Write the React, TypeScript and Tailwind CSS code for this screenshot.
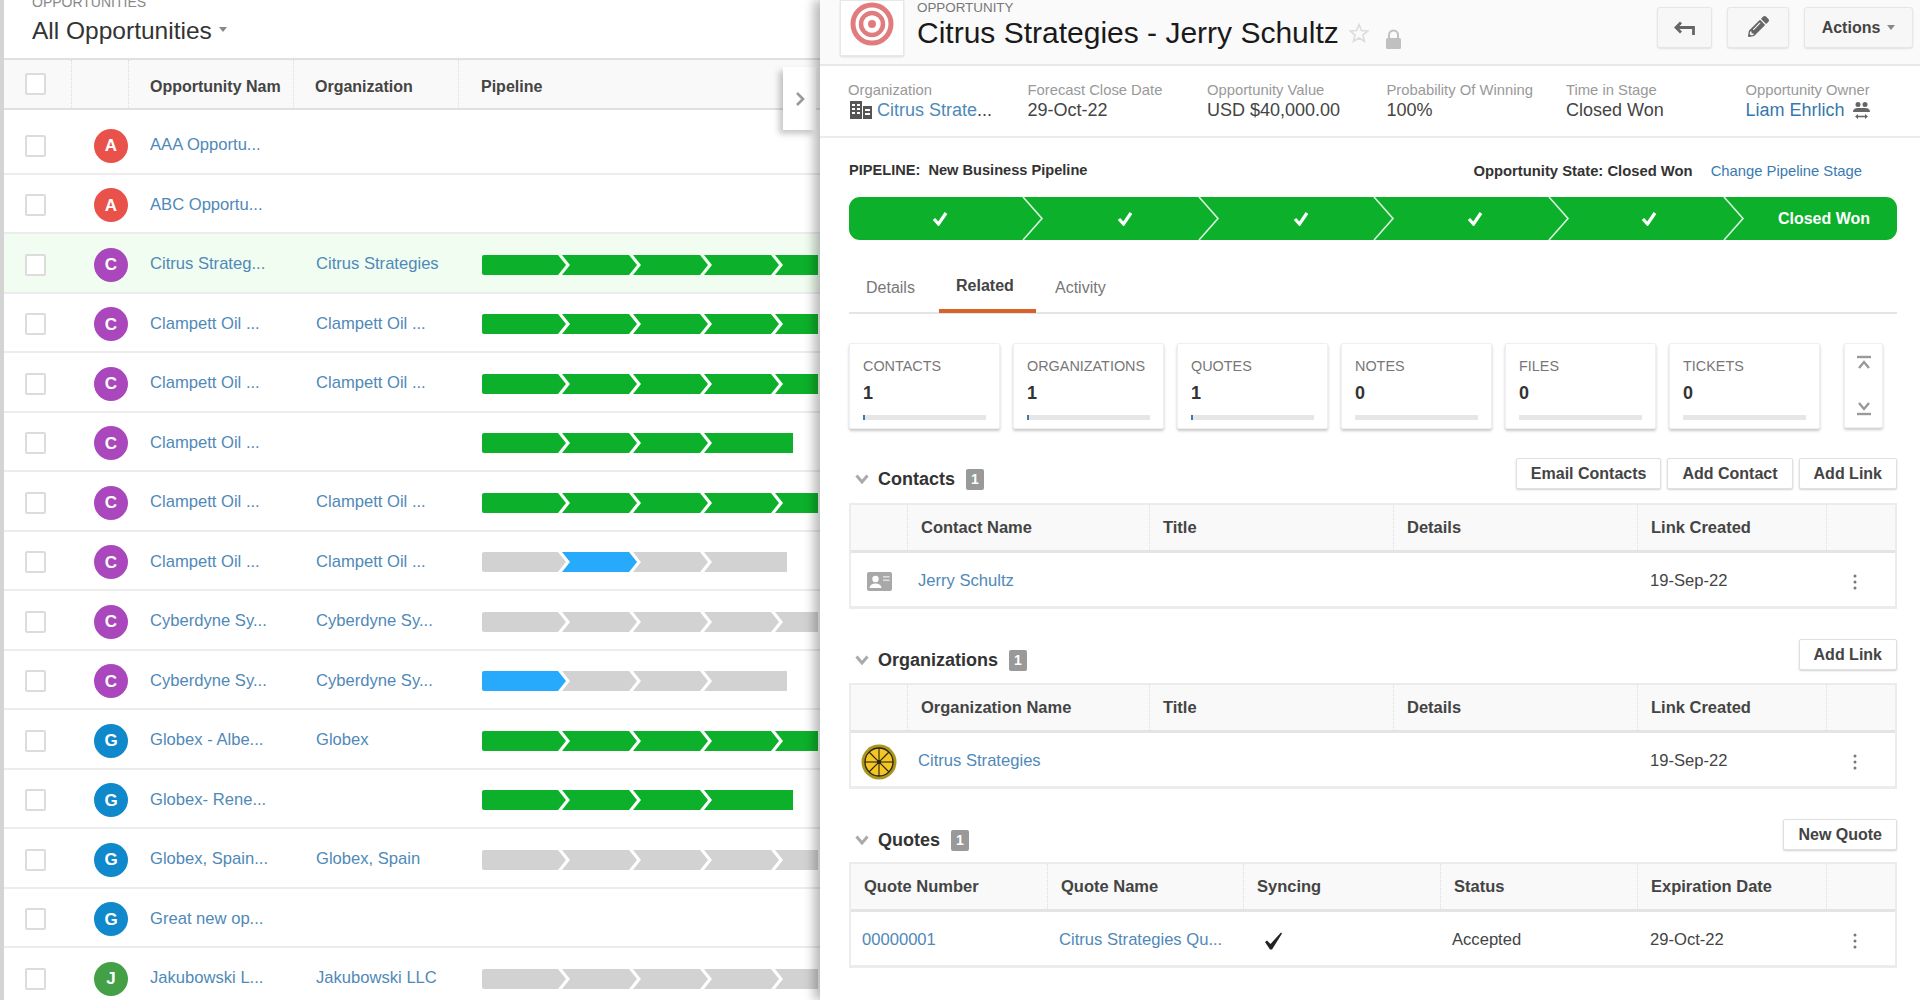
import React from "react";
import { FaPencilAlt } from "react-icons/fa";

const GREEN = "#0db02b";
const GRAY = "#d2d2d2";
const BLUE = "#27aafc";

type Row = { l: string; color: string; name: string; org?: string; stages?: string[]; end?: number; hl?: boolean };

const g5 = [GREEN, GREEN, GREEN, GREEN, GREEN];
const g4 = [GREEN, GREEN, GREEN, GREEN];
const n5 = [GRAY, GRAY, GRAY, GRAY, GRAY];

const rows: Row[] = [
  { l: "A", color: "#e8524a", name: "AAA Opportu..." },
  { l: "A", color: "#e8524a", name: "ABC Opportu..." },
  { l: "C", color: "#ab47bc", name: "Citrus Strateg...", org: "Citrus Strategies", stages: g5, hl: true },
  { l: "C", color: "#ab47bc", name: "Clampett Oil ...", org: "Clampett Oil ...", stages: g5 },
  { l: "C", color: "#ab47bc", name: "Clampett Oil ...", org: "Clampett Oil ...", stages: g5 },
  { l: "C", color: "#ab47bc", name: "Clampett Oil ...", stages: g4, end: 311 },
  { l: "C", color: "#ab47bc", name: "Clampett Oil ...", org: "Clampett Oil ...", stages: g5 },
  { l: "C", color: "#ab47bc", name: "Clampett Oil ...", org: "Clampett Oil ...", stages: [GRAY, BLUE, GRAY, GRAY], end: 305 },
  { l: "C", color: "#ab47bc", name: "Cyberdyne Sy...", org: "Cyberdyne Sy...", stages: n5 },
  { l: "C", color: "#ab47bc", name: "Cyberdyne Sy...", org: "Cyberdyne Sy...", stages: [BLUE, GRAY, GRAY, GRAY], end: 305 },
  { l: "G", color: "#0f88cc", name: "Globex - Albe...", org: "Globex", stages: g5 },
  { l: "G", color: "#0f88cc", name: "Globex- Rene...", stages: g4, end: 311 },
  { l: "G", color: "#0f88cc", name: "Globex, Spain...", org: "Globex, Spain", stages: n5 },
  { l: "G", color: "#0f88cc", name: "Great new op..." },
  { l: "J", color: "#43a047", name: "Jakubowski L...", org: "Jakubowski LLC", stages: n5 },
];

function Stages({ stages, end }: { stages: string[]; end?: number }) {
  return (
    <svg width="336" height="20" className="block">
      {stages.map((c, i) => {
        const last = i === stages.length - 1 && end !== undefined;
        if (i === 0) return <path key={i} d="M2 0 L76 0 L84 10 L76 20 L2 20 Q0 20 0 18 L0 2 Q0 0 2 0 Z" fill={c} />;
        const s = 80 + 71 * (i - 1);
        const pts = last
          ? `${s},0 ${end},0 ${end},20 ${s},20 ${s + 8},10`
          : `${s},0 ${s + 67},0 ${s + 75},10 ${s + 67},20 ${s},20 ${s + 8},10`;
        return <polygon key={i} points={pts} fill={c} />;
      })}
    </svg>
  );
}

function Check() {
  return <div className="w-[21px] h-[22px] border-2 border-[#dcdcdc] rounded-[2px] bg-white" />;
}

function LeftPanel() {
  return (
    <div className="relative w-[820px] h-[1000px] flex-none bg-white border-l-4 border-[#d4d4d4] overflow-hidden">
      <div className="h-[58px] pl-[28px] flex flex-col">
        <div className="mt-[-5px] text-[14px] leading-[14px] text-[#888]">OPPORTUNITIES</div>
        <div className="mt-[6.5px] flex items-center gap-[7px] text-[24.5px] leading-[30px] text-[#333]">
          All Opportunities
          <svg width="8" height="5" className="mt-[-2px]"><polygon points="0,0 8,0 4,5" fill="#888" /></svg>
        </div>
      </div>
      <div className="h-[52px] grid grid-cols-[68px_57px_165px_165px_1fr] bg-[#f9f9f9] border-t-2 border-b-2 border-[#e0e0e0] text-[16px] font-bold text-[#444]">
        <div className="pl-[21px] flex items-center border-r border-dotted border-[#ddd]"><Check /></div>
        <div className="border-r border-dotted border-[#ddd]" />
        <div className="pl-[21px] pt-[5px] flex items-center border-r border-dotted border-[#ddd]">
          <div className="w-[131px] overflow-hidden whitespace-nowrap">Opportunity Name</div>
        </div>
        <div className="pl-[21px] pt-[5px] flex items-center border-r border-dotted border-[#ddd]">Organization</div>
        <div className="pl-[22px] pt-[5px] flex items-center">Pipeline</div>
      </div>
      <div className="pt-[5px]">
        {rows.map((r, i) => (
          <div
            key={i}
            className={`h-[59.5px] pt-[4px] grid grid-cols-[68px_57px_165px_165px_1fr] items-center border-b-2 border-[#ececec] text-[16.6px] text-[#4f89b8] whitespace-nowrap ${r.hl ? "bg-[#f1fdf0]" : "bg-white"}`}
          >
            <div className="pl-[21px]"><Check /></div>
            <div className="pl-[22px]">
              <div className="w-[34px] h-[34px] rounded-full flex items-center justify-center text-white font-bold text-[17px]" style={{ backgroundColor: r.color }}>{r.l}</div>
            </div>
            <div className="pl-[21px]">{r.name}</div>
            <div className="pl-[22px]">{r.org}</div>
            <div className="pl-[23px] overflow-hidden">{r.stages && <Stages stages={r.stages} end={r.end} />}</div>
          </div>
        ))}
      </div>
      <div className="absolute left-[779px] top-[67px] w-[33px] h-[63px] bg-white shadow-[-4px_4px_6px_rgba(0,0,0,0.22)] flex items-center justify-center">
        <svg width="10" height="14" viewBox="0 0 10 14" fill="none" stroke="#999" strokeWidth="2.6"><path d="M2 1 L8 7 L2 13" /></svg>
      </div>
    </div>
  );
}

const btn = "h-[31px] px-[14px] flex items-center bg-white border border-[#e0e0e0] rounded-[2px] shadow-[0_1px_2px_rgba(0,0,0,0.18)] text-[16px] font-bold text-[#444] whitespace-nowrap";

function SectionHead({ title, mt, children }: { title: string; mt: string; children: React.ReactNode }) {
  return (
    <div className={`flex justify-between items-start ${mt}`}>
      <div className="mt-[10px] flex items-center text-[18px] leading-[22px] font-bold text-[#333]">
        <svg width="14" height="10" viewBox="0 0 14 10" fill="none" stroke="#aaa" strokeWidth="3" className="ml-[6px] mr-[9px]"><path d="M1.5 1.5 L7 8 L12.5 1.5" /></svg>
        {title}
        <span className="ml-[11px] w-[18px] h-[21px] rounded-[2px] bg-[#999] text-white text-[14px] flex items-center justify-center">1</span>
      </div>
      <div className="flex gap-[6px]">{children}</div>
    </div>
  );
}

function Dots() {
  return (
    <svg width="4" height="16" viewBox="0 0 4 16" fill="#777" className="ml-[26px]">
      <circle cx="2" cy="2" r="1.5" /><circle cx="2" cy="8" r="1.5" /><circle cx="2" cy="14" r="1.5" />
    </svg>
  );
}

const th = "flex items-center pl-[13px] border-r border-dotted border-[#ddd]";
const tableBox = "border-2 border-[#ececec] border-b-[3px]";
const headRow = "h-[48px] grid bg-[#f9f9f9] border-b-[3px] border-[#e4e4e4] text-[16.5px] font-bold text-[#444] whitespace-nowrap";
const bodyRow = "h-[53px] pt-[4px] grid items-center text-[16.6px] text-[#444] whitespace-nowrap";
const lnk = "text-[#4f89b8]";

function LinkTable({ name, icon, label, mt }: { name: string; icon: React.ReactNode; label: string; mt: string }) {
  const cols = "grid-cols-[57px_242px_244px_244px_189px_1fr]";
  return (
    <div className={`${tableBox} ${mt}`}>
      <div className={`${headRow} ${cols}`}>
        <div className={th} />
        <div className={th}>{name}</div>
        <div className={th}>Title</div>
        <div className={th}>Details</div>
        <div className={th}>Link Created</div>
        <div />
      </div>
      <div className={`${bodyRow} ${cols}`}>
        <div className="flex justify-center">{icon}</div>
        <div className={`pl-[10px] ${lnk}`}>{label}</div>
        <div />
        <div />
        <div className="pl-[12px]">19-Sep-22</div>
        <Dots />
      </div>
    </div>
  );
}

function QuoteTable() {
  const cols = "grid-cols-[197px_196px_197px_197px_189px_1fr]";
  return (
    <div className={`${tableBox} mt-[11px]`}>
      <div className={`${headRow} ${cols}`}>
        <div className={th}>Quote Number</div>
        <div className={th}>Quote Name</div>
        <div className={th}>Syncing</div>
        <div className={th}>Status</div>
        <div className={th}>Expiration Date</div>
        <div />
      </div>
      <div className={`${bodyRow} ${cols}`}>
        <div className={`pl-[11px] ${lnk}`}>00000001</div>
        <div className={`pl-[11px] ${lnk}`}>Citrus Strategies Qu...</div>
        <div className="pl-[20px]">
          <svg width="20" height="18" viewBox="0 0 20 18" fill="#222"><path d="M1 10 L3 8.5 L6.5 12 L17 0.5 L18 1.5 L8 17.5 L6 17.5 Z" /></svg>
        </div>
        <div className="pl-[11px]">Accepted</div>
        <div className="pl-[12px]">29-Oct-22</div>
        <Dots />
      </div>
    </div>
  );
}

function ContactIcon() {
  return (
    <svg width="25" height="19" viewBox="0 0 25 19" className="ml-[-1px]">
      <rect width="25" height="19" rx="2" fill="#a8a8a8" />
      <circle cx="8.5" cy="7" r="3.2" fill="#fff" />
      <path d="M2.5 16 Q3 11.5 8.5 11.5 Q14 11.5 14.5 16 Z" fill="#fff" />
      <rect x="16" y="4" width="6.5" height="1.6" fill="#ddd" />
      <rect x="16" y="7.5" width="6.5" height="1.6" fill="#ddd" />
    </svg>
  );
}

function CitrusIcon() {
  return (
    <svg width="36" height="36" viewBox="0 0 36 36" className="ml-[-1px]">
      <circle cx="18" cy="18" r="17.5" fill="#a8951f" />
      <circle cx="18" cy="18" r="14" fill="#f3c525" />
      <g stroke="#2a2410" strokeWidth="1.1">
        <line x1="18" y1="4" x2="18" y2="32" />
        <line x1="4" y1="18" x2="32" y2="18" />
        <line x1="8" y1="8" x2="28" y2="28" />
        <line x1="28" y1="8" x2="8" y2="28" />
      </g>
      <circle cx="18" cy="18" r="14" fill="none" stroke="#2a2410" strokeWidth="1.3" />
      <circle cx="18" cy="18" r="2" fill="#2a2410" />
    </svg>
  );
}

function Info({ label, children }: { label: string; children: React.ReactNode }) {
  return (
    <div className="w-[179.5px] flex-none whitespace-nowrap">
      <div className="text-[14.8px] leading-[18px] text-[#999]">{label}</div>
      <div className="text-[18px] leading-[22px] text-[#444] flex items-center">{children}</div>
    </div>
  );
}

function BarCheck() {
  return (
    <svg width="18" height="14" viewBox="0 0 18 14" fill="none" stroke="#fff" strokeWidth="3.2"><path d="M3 7 L7.5 12 L15 1" /></svg>
  );
}

function Sep() {
  return (
    <svg width="22" height="43" viewBox="0 0 22 43" fill="none" stroke="#d9f5df" strokeWidth="1.6" className="absolute left-full top-0 z-10 ml-[-1px]">
      <path d="M1 0 L20 21.5 L1 43" />
    </svg>
  );
}

function Stat({ label, n }: { label: string; n: number }) {
  return (
    <div className="w-[151px] h-[86px] flex-none bg-white border border-[#f0f0f0] rounded-[2px] shadow-[0_2px_3px_rgba(0,0,0,0.22)] pl-[13px] pt-[13px]">
      <div className="text-[14.4px] leading-[18px] text-[#777]">{label}</div>
      <div className="mt-[7px] text-[18px] leading-[22px] font-bold text-[#333]">{n}</div>
      <div className="mt-[11px] w-[123px] h-[5px] bg-[#e6e6e6]">
        {n > 0 && <div className="w-[2px] h-full bg-[#3a7ab0]" />}
      </div>
    </div>
  );
}

function RightPanel() {
  return (
    <div className="relative z-10 w-[1100px] h-[1000px] flex-none bg-white shadow-[-6px_0_10px_rgba(0,0,0,0.28)] overflow-hidden">
      <div className="h-[66px] bg-[#fafafa] border-b-2 border-[#e8e8e8] flex items-start pl-[20px] pr-[7px]">
        <div className="w-[64px] h-[56px] bg-white border border-[#e8e8e8] shadow-[0_1px_2px_rgba(0,0,0,0.12)] flex items-center justify-center pb-[8px]">
          <svg width="44" height="44" viewBox="0 0 44 44" fill="none" stroke="#e07c7c">
            <circle cx="22" cy="22" r="19" strokeWidth="5" />
            <circle cx="22" cy="22" r="11" strokeWidth="4.5" />
            <circle cx="22" cy="22" r="4" fill="#e07c7c" stroke="none" />
          </svg>
        </div>
        <div className="ml-[13px] whitespace-nowrap">
          <div className="text-[13.4px] leading-[14px] mt-[1px] text-[#777]">OPPORTUNITY</div>
          <div className="text-[30px] leading-[34px] mt-[1px] text-[#1a1a1a]">Citrus Strategies - Jerry Schultz</div>
        </div>
        <svg width="20" height="20" viewBox="0 0 24 24" fill="none" stroke="#ddd" strokeWidth="2" className="ml-[10px] mt-[23px]">
          <path d="M12 2 L15 9 L22.5 9.5 L16.8 14.4 L18.6 22 L12 18 L5.4 22 L7.2 14.4 L1.5 9.5 L9 9 Z" />
        </svg>
        <svg width="17" height="20" viewBox="0 0 17 20" className="ml-[16px] mt-[29px]">
          <path d="M4 9 V6 A4.5 4.5 0 0 1 13 6 V9" fill="none" stroke="#c0c0c0" strokeWidth="2" />
          <rect x="1" y="9" width="15" height="11" rx="1.5" fill="#c0c0c0" />
        </svg>
        <div className="ml-auto flex gap-[15px] pt-[7px]">
          <div className="w-[55px] h-[41px] bg-[#f7f7f7] border border-[#e6e6e6] rounded-[3px] shadow-[0_1px_2px_rgba(0,0,0,0.1)] flex items-center justify-center pt-[3px]">
            <svg width="22" height="16" viewBox="0 0 22 16" fill="none" stroke="#666" strokeWidth="2.8"><path d="M7 1.5 L2 6.5 L7 11.5" /><path d="M3 6.5 H19.5 V14" /></svg>
          </div>
          <div className="w-[62px] h-[41px] bg-[#f7f7f7] border border-[#e6e6e6] rounded-[3px] shadow-[0_1px_2px_rgba(0,0,0,0.1)] flex items-center justify-center text-[#666] pb-[2px]">
            <FaPencilAlt size={21} />
          </div>
          <div className="w-[109px] h-[41px] bg-[#f7f7f7] border border-[#e6e6e6] rounded-[3px] shadow-[0_1px_2px_rgba(0,0,0,0.1)] flex items-center justify-center gap-[7px] text-[16px] font-bold text-[#444]">
            Actions
            <svg width="8" height="5"><polygon points="0,0 8,0 4,5" fill="#888" /></svg>
          </div>
        </div>
      </div>

      <div className="h-[72px] border-b-2 border-[#ececec] flex pl-[28px] pt-[15px]">
        <Info label="Organization">
          <svg width="22" height="18" viewBox="0 0 22 18" className="mr-[5px] ml-[2px]" fill="#555">
            <path d="M0 0 H12 V18 H0 Z M13 5 H22 V18 H13 Z" />
            <g fill="#fff">
              <rect x="2" y="3" width="3" height="2" /><rect x="7" y="3" width="3" height="2" />
              <rect x="2" y="7" width="3" height="2" /><rect x="7" y="7" width="3" height="2" />
              <rect x="2" y="11" width="3" height="2" /><rect x="7" y="11" width="3" height="2" />
              <rect x="15" y="8" width="5" height="2" /><rect x="15" y="12" width="5" height="2" />
            </g>
          </svg>
          <span className="text-[#4f89b8]">Citrus Strate</span>...
        </Info>
        <Info label="Forecast Close Date">29-Oct-22</Info>
        <Info label="Opportunity Value">USD $40,000.00</Info>
        <Info label="Probability Of Winning">100%</Info>
        <Info label="Time in Stage">Closed Won</Info>
        <Info label="Opportunity Owner">
          <span className="text-[#3578ad]">Liam Ehrlich</span>
          <svg width="17" height="17" viewBox="0 0 17 17" fill="#666" className="ml-[8px]">
            <circle cx="5" cy="2.5" r="2.5" /><circle cx="12" cy="2.5" r="2.5" />
            <path d="M0 10 Q0 6 5 6 H12 Q17 6 17 10 Z" />
            <path d="M5 12 L2 14.5 L5 17 Z M12 12 L15 14.5 L12 17 Z" />
            <rect x="4" y="13.7" width="9" height="1.6" />
          </svg>
        </Info>
      </div>

      <div className="pl-[29px] pr-[23px]">
        <div className="mt-[24px] h-[18px] flex items-center whitespace-nowrap text-[14.8px] font-bold text-[#333]">
          <span className="text-[14.6px]">PIPELINE:&nbsp; New Business Pipeline</span>
          <span className="ml-auto">Opportunity State: Closed Won</span>
          <span className="ml-[18px] mr-[35px] font-normal text-[#3a7ab0]">Change Pipeline Stage</span>
        </div>

        <div className="mt-[17px] h-[43px] rounded-[11px] bg-[#0db02b] flex text-white font-bold text-[16px] whitespace-nowrap">
          <div className="relative w-[174px] flex items-center justify-center pl-[7px]"><BarCheck /><Sep /></div>
          <div className="relative w-[176px] flex items-center justify-center pl-[28px]"><BarCheck /><Sep /></div>
          <div className="relative w-[175px] flex items-center justify-center pl-[28px]"><BarCheck /><Sep /></div>
          <div className="relative w-[175px] flex items-center justify-center pl-[26px]"><BarCheck /><Sep /></div>
          <div className="relative w-[175px] flex items-center justify-center pl-[24px]"><BarCheck /><Sep /></div>
          <div className="flex-1 flex items-center justify-center pl-[27px]">Closed Won</div>
        </div>

        <div className="mt-[31px] h-[43px] border-b-2 border-[#e4e4e4] flex text-[16px] leading-[18px] whitespace-nowrap">
          <div className="w-[90px] pl-[17px] pt-[8px] text-[#777]">Details</div>
          <div className="w-[97px] h-[42px] pl-[17px] pt-[6px] font-bold text-[#444] border-b-4 border-[#d9622b]">Related</div>
          <div className="pl-[19px] pt-[8px] text-[#777]">Activity</div>
        </div>

        <div className="mt-[29px] flex gap-[13px]">
          <Stat label="CONTACTS" n={1} />
          <Stat label="ORGANIZATIONS" n={1} />
          <Stat label="QUOTES" n={1} />
          <Stat label="NOTES" n={0} />
          <Stat label="FILES" n={0} />
          <Stat label="TICKETS" n={0} />
          <div className="ml-[11px] w-[39px] h-[85px] bg-white border border-[#f0f0f0] rounded-[2px] shadow-[0_2px_3px_rgba(0,0,0,0.2)] flex flex-col items-center justify-between py-[11px]">
            <svg width="16" height="16" viewBox="0 0 16 16" fill="none" stroke="#999" strokeWidth="2.4"><path d="M1 2 H15" /><path d="M3 13 L8 7 L13 13" /></svg>
            <svg width="16" height="16" viewBox="0 0 16 16" fill="none" stroke="#999" strokeWidth="2.4"><path d="M3 3 L8 9 L13 3" /><path d="M1 14 H15" /></svg>
          </div>
        </div>

        <SectionHead title="Contacts" mt="mt-[29px]">
          <div className={btn}>Email Contacts</div>
          <div className={btn}>Add Contact</div>
          <div className={btn}>Add Link</div>
        </SectionHead>
        <LinkTable name="Contact Name" icon={<ContactIcon />} label="Jerry Schultz" mt="mt-[13px]" />

        <SectionHead title="Organizations" mt="mt-[30px]">
          <div className={btn}>Add Link</div>
        </SectionHead>
        <LinkTable name="Organization Name" icon={<CitrusIcon />} label="Citrus Strategies" mt="mt-[12px]" />

        <SectionHead title="Quotes" mt="mt-[30px]">
          <div className={btn}>New Quote</div>
        </SectionHead>
        <QuoteTable />

        <div className="mt-[32px] flex justify-end gap-[6px]">
          <div className="w-[144px] h-[31px] bg-white border border-[#e0e0e0] rounded-[2px]" />
          <div className="w-[134px] h-[31px] bg-white border border-[#e0e0e0] rounded-[2px]" />
          <div className="w-[132px] h-[31px] bg-white border border-[#e0e0e0] rounded-[2px]" />
        </div>
      </div>
    </div>
  );
}

export default function App() {
  return (
    <div className="w-[1920px] h-[1000px] overflow-hidden flex bg-white font-['Liberation_Sans',Arial,sans-serif]">
      <LeftPanel />
      <RightPanel />
    </div>
  );
}
